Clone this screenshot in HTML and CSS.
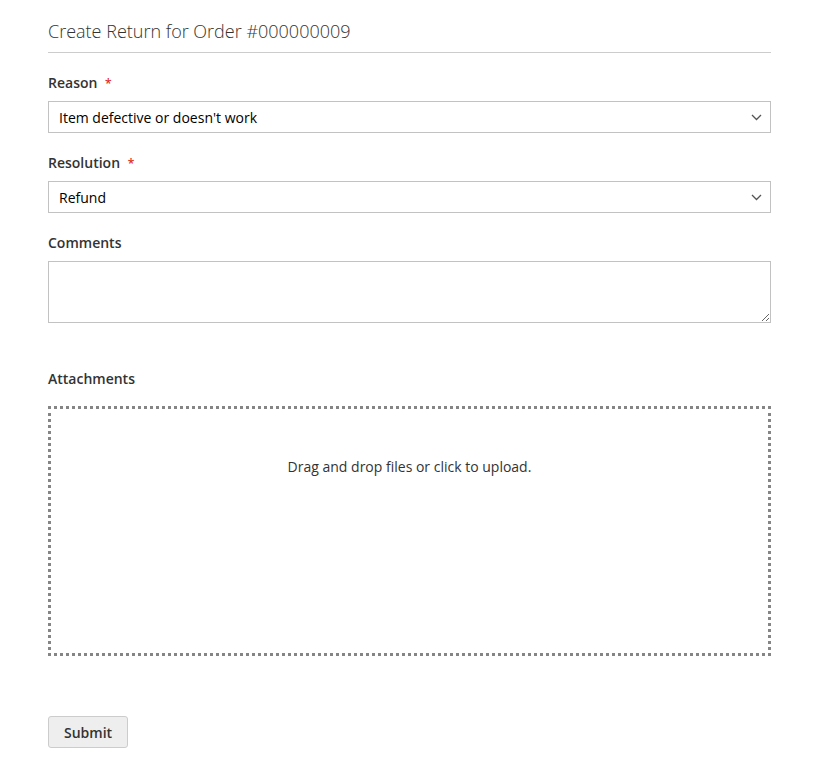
FILE: index.html
```html
<!DOCTYPE html>
<html lang="en">
<head>
<meta charset="utf-8">
<title>Create Return</title>
<link rel="stylesheet" href="styles.css">
</head>
<body>
<main class="page">
  <h1 class="title">Create Return for Order #000000009</h1>
  <form class="form">
    <div class="field">
      <label class="label">Reason <span class="req">*</span></label>
      <div class="select">
        <span class="select-value">Item defective or doesn't work</span>
        <svg class="chev" width="11" height="7" viewBox="0 0 11 7"><path d="M1 1 L5.5 5.5 L10 1" fill="none" stroke="#555" stroke-width="1.3"/></svg>
      </div>
    </div>
    <div class="field">
      <label class="label">Resolution <span class="req">*</span></label>
      <div class="select">
        <span class="select-value">Refund</span>
        <svg class="chev" width="11" height="7" viewBox="0 0 11 7"><path d="M1 1 L5.5 5.5 L10 1" fill="none" stroke="#555" stroke-width="1.3"/></svg>
      </div>
    </div>
    <div class="field">
      <label class="label">Comments</label>
      <textarea class="textarea"></textarea>
    </div>
    <div class="field attach">
      <label class="label">Attachments</label>
      <div class="dropzone">Drag and drop files or click to upload.</div>
    </div>
    <div class="actions">
      <button type="button" class="btn">Submit</button>
    </div>
  </form>
</main>
</body>
</html>
```
FILE: styles.css
```css
* { box-sizing: border-box; }
body {
  margin: 0;
  background: #fff;
  font-family: "Open Sans", "DejaVu Sans", sans-serif;
  color: #333;
}
.page {
  padding: 18px 54px 0 48px;
  width: 825px;
}
.title {
  margin: 0;
  font-size: 18px;
  font-weight: 300;
  color: #333;
  line-height: 26px;
  padding-bottom: 8px;
  border-bottom: 1px solid #ccc;
}
.form {
  display: flex;
  flex-direction: column;
  padding-top: 20px;
}
.field {
  display: flex;
  flex-direction: column;
  margin-bottom: 20px;
}
.label {
  font-size: 14px;
  font-weight: 600;
  line-height: 20px;
  margin-bottom: 7px;
  color: #333;
}
.req {
  color: #e02b27;
  font-size: 12px;
  margin-left: 4px;
}
.select {
  height: 32px;
  border: 1px solid #c2c2c2;
  display: flex;
  align-items: center;
  justify-content: space-between;
  padding: 0 8px 0 10px;
  font-size: 14px;
  color: #000;
}
.chev { display: block; }
.textarea {
  display: block;
  height: 62px;
  width: 100%;
  border: 1px solid #c2c2c2;
  border-radius: 0;
  margin: 1px 0 0;
  font-family: inherit;
}
.attach { margin-top: 26px; }
.attach .label { margin-bottom: 17px; }
.dropzone {
  height: 250px;
  border: 3px dotted #858585;
  text-align: center;
  font-size: 14px;
  color: #333;
  padding-top: 48px;
  line-height: 20px;
}
.actions {
  padding-top: 40px;
}
.btn {
  height: 32px;
  padding: 0 15px;
  background: #eee;
  border: 1px solid #ccc;
  border-radius: 3px;
  font-family: inherit;
  font-size: 14px;
  font-weight: 600;
  color: #333;
}
```
